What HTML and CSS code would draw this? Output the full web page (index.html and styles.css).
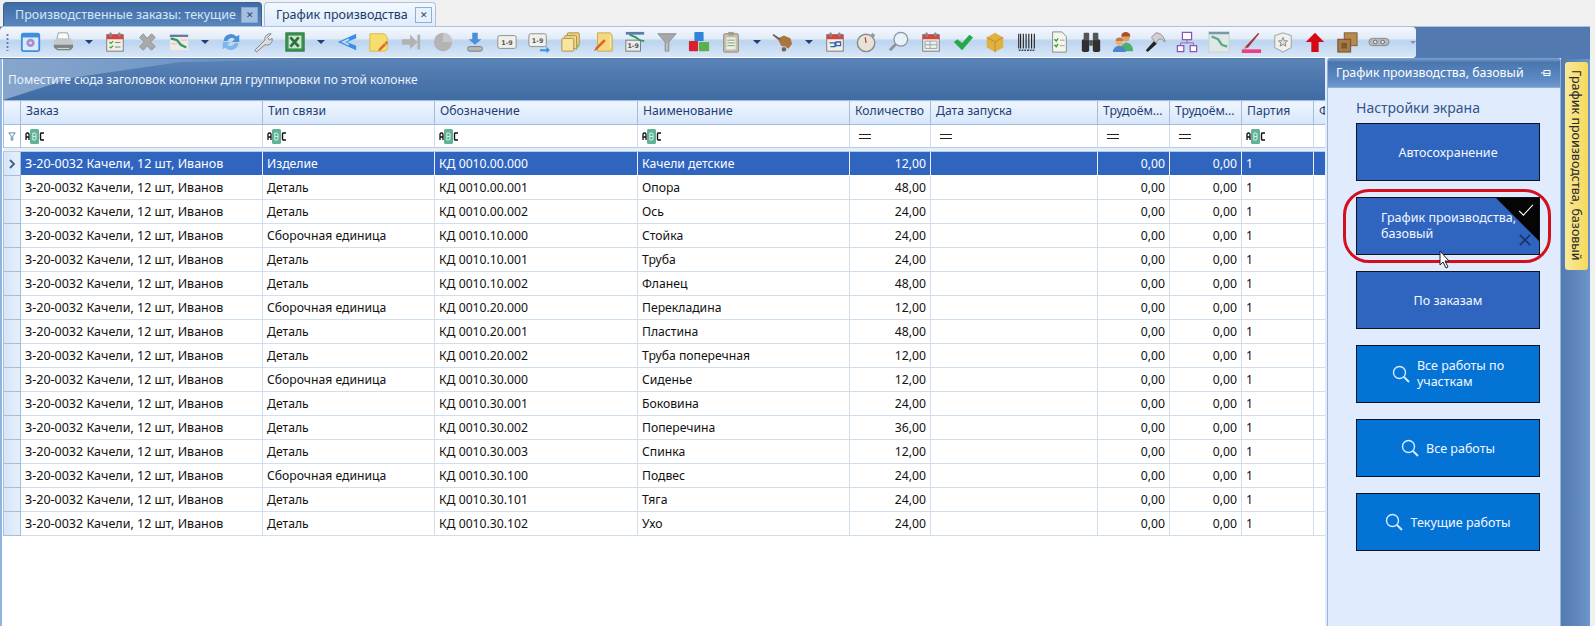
FILE: index.html
```html
<!DOCTYPE html>
<html lang="ru">
<head>
<meta charset="utf-8">
<title>График производства</title>
<link rel="stylesheet" href="styles.css">
</head>
<body>
<svg class="defs" width="0" height="0" aria-hidden="true">
  <defs>
    <symbol id="abc" viewBox="0 0 20 15">
      <rect x="5" y="0" width="9" height="15" rx="1.500" fill="#5fb394"/>
      <path d="M1 11V5l1-1h1l1 1v6M1 8h3" fill="none" stroke="#111" stroke-width="1.300"/>
      <path d="M7.800 4v7h2.500l.7-1V5l-.7-1zM8 7.500h3" fill="none" stroke="#d4f0e4" stroke-width="1"/>
      <path d="M19 4h-3l-.5 1v5l.5 1h3" fill="none" stroke="#111" stroke-width="1.400"/>
    </symbol>
    <symbol id="lens" viewBox="0 0 18 18">
      <circle cx="7.500" cy="7.500" r="6" fill="none" stroke="#d6ecff" stroke-width="1.400"/>
      <path d="M12 12l5 5" stroke="#d6ecff" stroke-width="2"/>
    </symbol>
    <symbol id="cal" viewBox="0 0 24 24">
      <rect x="3" y="4" width="18" height="18" fill="#f2efe6" stroke="#777"/>
      <rect x="3" y="4" width="18" height="5" fill="#d8443c"/>
      <rect x="6" y="1.500" width="2.500" height="5" rx="1" fill="#8a8a8a"/>
      <rect x="15.500" y="1.500" width="2.500" height="5" rx="1" fill="#8a8a8a"/>
    </symbol>
  </defs>
</svg>

<div class="app">
  <nav class="tabs">
    <div class="tab">Производственные заказы: текущие <span class="tab-close">✕</span></div>
    <div class="tab tab-active">График производства <span class="tab-close">✕</span></div>
  </nav>

  <div class="toolbar-row">
    <div class="toolbar">
      <span class="grip"></span>
      <span class="ti"><svg viewBox="0 0 24 24"><rect x="2" y="3" width="19" height="19" rx="2" fill="#dbe9f8" stroke="#3d8fe0" stroke-width="2"/><rect x="2" y="3" width="19" height="4" fill="#3d8fe0"/><circle cx="11.500" cy="13" r="4.500" fill="#a48fd0"/><circle cx="11.500" cy="13" r="1.500" fill="#e5def4"/></svg></span>
      <span class="ti"><svg viewBox="0 0 24 24"><path d="M7 2h10l2 8H5z" fill="#fafafa" stroke="#9a9a9a"/><path d="M2 11l3-3h15l3 4v6l-3 3H6l-4-4z" fill="#c4c8cc"/><path d="M2 15h21v3l-3 3H6l-4-3z" fill="#7d8286"/><path d="M6 19h13" stroke="#e4e4e4"/></svg></span>
      <span class="dd"></span>
      <span class="ti"><svg viewBox="0 0 24 24"><use href="#cal"/><path d="M6 12l1.500 1.500L10 11M6 17l1.500 1.500L10 16" stroke="#3aa036" fill="none" stroke-width="1.300"/><path d="M12 12.500h6M12 17.500h6" stroke="#777"/></svg></span>
      <span class="ti"><svg viewBox="0 0 24 24"><path d="M4 7l4-4 4 5 5-5 4 4-5 5 5 5-4 4-5-5-4 5-4-4 5-5z" fill="#a9a9a9" stroke="#939393"/></svg></span>
      <span class="ti"><svg viewBox="0 0 24 24"><rect x="2" y="4" width="20" height="17" fill="#f1e8e8"/><rect x="2" y="4" width="20" height="2.500" fill="#5d7da8"/><path d="M3 8l7 2 4 5 6 3" fill="none" stroke="#2e9a5c" stroke-width="2.500"/><path d="M3 14h7M14 10h7" stroke="#e2b8b8"/></svg></span>
      <span class="dd"></span>
      <span class="ti"><svg viewBox="0 0 24 24"><path d="M4 11a8 8 0 0 1 14-5l3-2v8h-8l3-3a5 5 0 0 0-8 2z" fill="#4d90d8"/><path d="M20 13a8 8 0 0 1-14 5l-3 2v-8h8l-3 3a5 5 0 0 0 8-2z" fill="#7fb6ea"/></svg></span>
      <span class="ti"><svg viewBox="0 0 24 24"><path d="M3 21l11-11a6 6 0 0 1 7-7l-4 4 2 3 3-2a6 6 0 0 1-8 7L5 23z" fill="#dcdcdc" stroke="#808080"/></svg></span>
      <span class="ti"><svg viewBox="0 0 24 24"><rect x="2" y="2" width="20" height="20" fill="#3a9150" stroke="#2a7a3e"/><rect x="5" y="5" width="14" height="14" fill="#cfe3d0"/><path d="M7 7l9 10M16 7L7 17" stroke="#23733a" stroke-width="3"/></svg></span>
      <span class="dd"></span>
      <span class="ti"><svg viewBox="0 0 24 24"><path d="M22 3v5L12 12l10 4v5L2 12z" fill="#3c8fe0"/><path d="M14 9l-6 3 6 3" fill="none" stroke="#bfe0fb" stroke-width="2"/></svg></span>
      <span class="ti"><svg viewBox="0 0 24 24"><path d="M2 3h16l3 4v13l-3 2H2z" fill="#f6dd6c" stroke="#d9b84a"/><path d="M12 19l8-8 2 2-8 8-3 1z" fill="#d96f2c"/><path d="M18 13l2 2" stroke="#f4c8a6"/></svg></span>
      <span class="ti"><svg viewBox="0 0 24 24"><path d="M2 9h9V4l8 8-8 8v-5H2z" fill="#b2b2b2"/><rect x="19" y="4" width="3" height="16" fill="#b2b2b2"/></svg></span>
      <span class="ti"><svg viewBox="0 0 24 24"><circle cx="12" cy="12" r="10" fill="#b4b4b4"/><path d="M12 12V2a10 10 0 0 1 10 10z" fill="#c8c8c8"/></svg></span>
      <span class="ti"><svg viewBox="0 0 24 24"><path d="M9 2h6v7h4l-7 6-7-6h4z" fill="#4a90d6"/><rect x="4" y="17" width="16" height="5" rx="2" fill="#b8b8b8" stroke="#777"/></svg></span>
      <span class="ti"><svg viewBox="0 0 24 24"><rect x="2" y="5" width="20" height="14" rx="2" fill="#f0f0ea" stroke="#8b8b8b"/><text class="nine" x="12" y="15">1-9</text></svg></span>
      <span class="ti"><svg viewBox="0 0 24 24"><rect x="1" y="3" width="19" height="14" rx="2" fill="#f0f0ea" stroke="#8b8b8b"/><text class="nine" x="10.500" y="13">1-9</text><path d="M13 20h7v-3l4 4-4 3v-2h-7z" fill="#3f8fdc"/></svg></span>
      <span class="ti"><svg viewBox="0 0 24 24"><rect x="8" y="2" width="13" height="14" rx="1" fill="#f0cf7a" stroke="#a98b4a"/><rect x="5" y="5" width="13" height="14" rx="1" fill="#f3d98a" stroke="#a98b4a"/><rect x="2" y="8" width="13" height="14" rx="1" fill="#f6e4a0" stroke="#a98b4a"/><path d="M18 14l3 2-4 6" fill="#8cbc5c"/></svg></span>
      <span class="ti"><svg viewBox="0 0 24 24"><path d="M6 2h14l2 3v17H6z" fill="#f5d77f" stroke="#c9a84e"/><path d="M2 22l2-4L13 9l2 2-9 9z" fill="#d9622c"/><path d="M20 6v12" stroke="#fff2c4"/></svg></span>
      <span class="ti"><svg viewBox="0 0 24 24"><rect x="2" y="10" width="16" height="12" fill="#eaeaea" stroke="#777"/><text class="nine" x="10" y="19">1-9</text><rect x="2" y="1" width="20" height="3" fill="#5d7da8"/><path d="M6 4l7 3 4 3 5 1" fill="none" stroke="#2e9a5c" stroke-width="2"/></svg></span>
      <span class="ti"><svg viewBox="0 0 24 24"><path d="M2 3h20l-8 9v10h-4V12z" fill="#a8a8a8" stroke="#8c8c8c"/><path d="M12 13v9" stroke="#d8d8d8"/></svg></span>
      <span class="ti"><svg viewBox="0 0 24 24"><rect x="7" y="1" width="10" height="10" rx="1" fill="#2f83d8"/><rect x="1" y="11" width="10" height="11" rx="1" fill="#d92030"/><rect x="12" y="12" width="11" height="10" rx="1" fill="#5cb04c"/></svg></span>
      <span class="ti"><svg viewBox="0 0 24 24"><rect x="4" y="3" width="16" height="20" rx="1" fill="#c8bfae" stroke="#8c8474"/><rect x="9" y="1" width="6" height="4" fill="#a59c8a"/><rect x="7" y="7" width="10" height="13" fill="#eef0e6"/><path d="M8 10h8M8 13h8M8 16h8" stroke="#6f9c6c"/></svg></span>
      <span class="dd"></span>
      <span class="ti"><svg viewBox="0 0 24 24"><path d="M1 5l6 3 6-3 7 3 2 6-4 5-8-3-3-6z" fill="#a8763e"/><path d="M1 4l8 5" stroke="#555" stroke-width="1.500"/><circle cx="13" cy="20" r="3" fill="#666" stroke="#ddd"/></svg></span>
      <span class="dd"></span>
      <span class="ti"><svg viewBox="0 0 24 24"><use href="#cal"/><path d="M6 13h6v4H7M18 12h-5v4h5z" fill="none" stroke="#2d62b4" stroke-width="1.400"/></svg></span>
      <span class="ti"><svg viewBox="0 0 24 24"><circle cx="11" cy="13" r="9.500" fill="#e8e3d8" stroke="#8a8a8a" stroke-width="1.600"/><path d="M11 13l-1-6" stroke="#b04040" stroke-width="1.300"/><path d="M18 2l3 3-2 2-3-3z" fill="#999"/></svg></span>
      <span class="ti"><svg viewBox="0 0 24 24"><circle cx="14" cy="9" r="7.500" fill="#e9f1f8" stroke="#8d959c" stroke-width="1.500"/><path d="M8.500 14.500L2 21" stroke="#8d959c" stroke-width="3"/></svg></span>
      <span class="ti"><svg viewBox="0 0 24 24"><use href="#cal"/><path d="M5.500 11h13v8h-13zM5.500 15h13M11 11v8" fill="none" stroke="#8ca0b8"/></svg></span>
      <span class="ti"><svg viewBox="0 0 24 24"><path d="M2 12l4-3 5 4 8-9 4 3L11 21z" fill="#25a84a"/></svg></span>
      <span class="ti"><svg viewBox="0 0 24 24"><path d="M12 2l9 5v11l-9 5-9-5V7z" fill="#e0b040"/><path d="M3 7l9 5 9-5M12 12v11" fill="none" stroke="#b98a24"/></svg></span>
      <span class="ti"><svg viewBox="0 0 24 24"><path d="M3 3v16M5 3v16M8 3v16M11 3v16M14 3v16M17 3v16M20 3v16" stroke="#222" stroke-width="1.200"/><path d="M3 21h18" stroke="#444" stroke-dasharray="2 1" stroke-width="1.500"/></svg></span>
      <span class="ti"><svg viewBox="0 0 24 24"><path d="M5 1h10l5 5v17H5z" fill="#f2f6ec" stroke="#7d8c7d"/><path d="M7 9l2 2 2-3M7 15l2 2 2-3" stroke="#35a035" fill="none" stroke-width="1.500"/><path d="M13 10h5M13 16h5" stroke="#999"/></svg></span>
      <span class="ti"><svg viewBox="0 0 24 24"><rect x="2" y="9" width="8" height="14" rx="2" fill="#2f2f2f"/><rect x="14" y="9" width="8" height="14" rx="2" fill="#2f2f2f"/><rect x="4" y="2" width="6" height="8" rx="1" fill="#555"/><rect x="14" y="2" width="6" height="8" rx="1" fill="#555"/><rect x="10" y="10" width="4" height="6" fill="#555"/></svg></span>
      <span class="ti"><svg viewBox="0 0 24 24"><circle cx="15" cy="7" r="4.500" fill="#e2a06a"/><path d="M10 6a5 5 0 0 1 10 0z" fill="#a8522c"/><path d="M9 22a6 8 0 0 1 14 0z" fill="#4caf70"/><circle cx="8" cy="12" r="4" fill="#eab07a"/><path d="M4 11a4 4 0 0 1 8 0z" fill="#c47a3c"/><path d="M1 23a7 7 0 0 1 14 0z" fill="#4b86cc"/></svg></span>
      <span class="ti"><svg viewBox="0 0 24 24"><path d="M2 21l9-10 3 3L4 23z" fill="#222"/><path d="M8 7l5-5c5 0 9 4 10 10-3-3-5-4-7-3l-3 4z" fill="#d0d0d0" stroke="#8a8a8a"/></svg></span>
      <span class="ti"><svg viewBox="0 0 24 24"><path d="M12 9v4M5 17v-4h14v4" fill="none" stroke="#8b5fb0"/><rect x="7" y="1.500" width="10" height="8" fill="#fff" stroke="#8b4fb0" stroke-width="1.300"/><rect x="1.500" y="16" width="7" height="6.500" fill="#fff" stroke="#8b4fb0" stroke-width="1.300"/><rect x="15.500" y="16" width="7" height="6.500" fill="#fff" stroke="#8b4fb0" stroke-width="1.300"/></svg></span>
      <span class="ti"><svg viewBox="0 0 24 24"><rect x="1" y="1" width="22" height="22" fill="#dfe8e4" stroke="#c6d2cc"/><rect x="1" y="1" width="22" height="2.500" fill="#7a98a8"/><path d="M4 6l7 3 4 6 6 2" fill="none" stroke="#5da890" stroke-width="2.500"/></svg></span>
      <span class="ti"><svg viewBox="0 0 24 24"><rect x="2" y="20" width="21" height="4" fill="#ee3f80"/><path d="M6 17L20 2l1 1-12 15-4 1z" fill="#9e3c3c"/><path d="M5 17l3 2-4 0z" fill="#d8a070"/></svg></span>
      <span class="ti"><svg viewBox="0 0 24 24"><path d="M3 5l9-3 9 3v13l-9 5-9-5z" fill="#f0f0ec" stroke="#9a9a9a"/><path d="M12 7l1.500 3.500 3.500.3-2.700 2.300.9 3.500-3.200-1.900-3.200 1.900.9-3.500L7 10.800l3.500-.3z" fill="#dcdcd0" stroke="#888"/></svg></span>
      <span class="ti"><svg viewBox="0 0 24 24"><path d="M12 2l10 10h-6v11H8V12H2z" fill="#d70a14"/></svg></span>
      <span class="ti"><svg viewBox="0 0 24 24"><rect x="9" y="2" width="14" height="14" fill="#b88a50" stroke="#7a5a30"/><rect x="2" y="9" width="14" height="14" fill="#a87a44" stroke="#6a4c28"/><rect x="6" y="13" width="6" height="6" fill="#7a5a30"/></svg></span>
      <span class="ti"><svg viewBox="0 0 24 24"><rect x="1" y="8" width="22" height="8" rx="4" fill="#b4b9bd" stroke="#888"/><circle cx="8" cy="12" r="2" fill="#e5e5e5" stroke="#666"/><circle cx="16" cy="12" r="2" fill="#e5e5e5" stroke="#666"/></svg></span>
      <span class="overflow"></span>
    </div>
  </div>

  <div class="workspace">
    <section class="grid">
      <div class="group-bar">
        <span class="group-shine"></span>
        <span class="group-text">Поместите сюда заголовок колонки для группировки по этой колонке</span>
      </div>
      <table class="table">
        <colgroup>
          <col class="c0"><col class="c1"><col class="c2"><col class="c3"><col class="c4"><col class="c5"><col class="c6"><col class="c7"><col class="c8"><col class="c9"><col class="c10">
        </colgroup>
        <thead>
          <tr class="head">
            <th></th><th>Заказ</th><th>Тип связи</th><th>Обозначение</th><th>Наименование</th><th>Количество</th><th>Дата запуска</th><th>Трудоём...</th><th>Трудоём...</th><th>Партия</th><th>Ф</th>
          </tr>
          <tr class="filter">
            <th class="rowhead"><svg class="funnel" viewBox="0 0 10 11"><path d="M1 1h8L6 5v5H4V5z" fill="none" stroke="#3f6c9c"/></svg></th>
            <td><svg class="abc"><use href="#abc"/></svg></td>
            <td><svg class="abc"><use href="#abc"/></svg></td>
            <td><svg class="abc"><use href="#abc"/></svg></td>
            <td><svg class="abc"><use href="#abc"/></svg></td>
            <td><span class="eq"></span></td>
            <td><span class="eq"></span></td>
            <td><span class="eq"></span></td>
            <td><span class="eq"></span></td>
            <td><svg class="abc"><use href="#abc"/></svg></td>
            <td></td>
          </tr>
          <tr class="gap"><td colspan="11"></td></tr>
        </thead>
        <tbody>
          <tr class="selected"><th class="rowhead"><svg class="marker" viewBox="0 0 7 10"><path d="M1 1l4 4-4 4" fill="none" stroke="#3f5f86" stroke-width="1.800"/></svg></th><td class="order">З-20-0032 Качели, 12 шт, Иванов</td><td>Изделие</td><td>КД 0010.00.000</td><td>Качели детские</td><td class="n">12,00</td><td></td><td class="n">0,00</td><td class="n">0,00</td><td>1</td><td></td></tr>
          <tr><th class="rowhead"></th><td class="order">З-20-0032 Качели, 12 шт, Иванов</td><td>Деталь</td><td>КД 0010.00.001</td><td>Опора</td><td class="n">48,00</td><td></td><td class="n">0,00</td><td class="n">0,00</td><td>1</td><td></td></tr>
          <tr><th class="rowhead"></th><td class="order">З-20-0032 Качели, 12 шт, Иванов</td><td>Деталь</td><td>КД 0010.00.002</td><td>Ось</td><td class="n">24,00</td><td></td><td class="n">0,00</td><td class="n">0,00</td><td>1</td><td></td></tr>
          <tr><th class="rowhead"></th><td class="order">З-20-0032 Качели, 12 шт, Иванов</td><td>Сборочная единица</td><td>КД 0010.10.000</td><td>Стойка</td><td class="n">24,00</td><td></td><td class="n">0,00</td><td class="n">0,00</td><td>1</td><td></td></tr>
          <tr><th class="rowhead"></th><td class="order">З-20-0032 Качели, 12 шт, Иванов</td><td>Деталь</td><td>КД 0010.10.001</td><td>Труба</td><td class="n">24,00</td><td></td><td class="n">0,00</td><td class="n">0,00</td><td>1</td><td></td></tr>
          <tr><th class="rowhead"></th><td class="order">З-20-0032 Качели, 12 шт, Иванов</td><td>Деталь</td><td>КД 0010.10.002</td><td>Фланец</td><td class="n">48,00</td><td></td><td class="n">0,00</td><td class="n">0,00</td><td>1</td><td></td></tr>
          <tr><th class="rowhead"></th><td class="order">З-20-0032 Качели, 12 шт, Иванов</td><td>Сборочная единица</td><td>КД 0010.20.000</td><td>Перекладина</td><td class="n">12,00</td><td></td><td class="n">0,00</td><td class="n">0,00</td><td>1</td><td></td></tr>
          <tr><th class="rowhead"></th><td class="order">З-20-0032 Качели, 12 шт, Иванов</td><td>Деталь</td><td>КД 0010.20.001</td><td>Пластина</td><td class="n">48,00</td><td></td><td class="n">0,00</td><td class="n">0,00</td><td>1</td><td></td></tr>
          <tr><th class="rowhead"></th><td class="order">З-20-0032 Качели, 12 шт, Иванов</td><td>Деталь</td><td>КД 0010.20.002</td><td>Труба поперечная</td><td class="n">12,00</td><td></td><td class="n">0,00</td><td class="n">0,00</td><td>1</td><td></td></tr>
          <tr><th class="rowhead"></th><td class="order">З-20-0032 Качели, 12 шт, Иванов</td><td>Сборочная единица</td><td>КД 0010.30.000</td><td>Сиденье</td><td class="n">12,00</td><td></td><td class="n">0,00</td><td class="n">0,00</td><td>1</td><td></td></tr>
          <tr><th class="rowhead"></th><td class="order">З-20-0032 Качели, 12 шт, Иванов</td><td>Деталь</td><td>КД 0010.30.001</td><td>Боковина</td><td class="n">24,00</td><td></td><td class="n">0,00</td><td class="n">0,00</td><td>1</td><td></td></tr>
          <tr><th class="rowhead"></th><td class="order">З-20-0032 Качели, 12 шт, Иванов</td><td>Деталь</td><td>КД 0010.30.002</td><td>Поперечина</td><td class="n">36,00</td><td></td><td class="n">0,00</td><td class="n">0,00</td><td>1</td><td></td></tr>
          <tr><th class="rowhead"></th><td class="order">З-20-0032 Качели, 12 шт, Иванов</td><td>Деталь</td><td>КД 0010.30.003</td><td>Спинка</td><td class="n">12,00</td><td></td><td class="n">0,00</td><td class="n">0,00</td><td>1</td><td></td></tr>
          <tr><th class="rowhead"></th><td class="order">З-20-0032 Качели, 12 шт, Иванов</td><td>Сборочная единица</td><td>КД 0010.30.100</td><td>Подвес</td><td class="n">24,00</td><td></td><td class="n">0,00</td><td class="n">0,00</td><td>1</td><td></td></tr>
          <tr><th class="rowhead"></th><td class="order">З-20-0032 Качели, 12 шт, Иванов</td><td>Деталь</td><td>КД 0010.30.101</td><td>Тяга</td><td class="n">24,00</td><td></td><td class="n">0,00</td><td class="n">0,00</td><td>1</td><td></td></tr>
          <tr><th class="rowhead"></th><td class="order">З-20-0032 Качели, 12 шт, Иванов</td><td>Деталь</td><td>КД 0010.30.102</td><td>Ухо</td><td class="n">24,00</td><td></td><td class="n">0,00</td><td class="n">0,00</td><td>1</td><td></td></tr>
        </tbody>
      </table>
    </section>

    <aside class="panel">
      <header class="panel-head">
        <span>График производства, базовый</span>
        <svg class="pin" viewBox="0 0 10 8"><path d="M0 4h3M3 1v6M3 1.500h6v5H3M3 4.500h6" fill="none" stroke="#fff"/></svg>
      </header>
      <div class="panel-body">
        <div class="panel-title">Настройки экрана</div>
        <button class="tile">Автосохранение</button>
        <div class="tile-wrap">
          <button class="tile tile-left"><span>График производства,<br>базовый</span>
            <span class="corner"></span>
            <svg class="check" viewBox="0 0 18 14"><path d="M1 8l5 5L17 1" fill="none" stroke="#fff" stroke-width="1.300"/></svg>
            <svg class="cross" viewBox="0 0 14 14"><path d="M1 1l12 12M13 1L1 13" fill="none" stroke="#1a3568" stroke-width="2.200"/></svg>
          </button>
          <span class="oval"></span>
          <svg class="cursor" viewBox="0 0 11 19"><path d="M1 1v14l3-3 3 6 2-1-3-6h4z" fill="#fff" stroke="#222"/></svg>
        </div>
        <button class="tile">По заказам</button>
        <button class="tile tile-search tile-wrapped"><svg class="lens"><use href="#lens"/></svg><span>Все работы по<br>участкам</span></button>
        <button class="tile tile-search"><svg class="lens"><use href="#lens"/></svg><span>Все работы</span></button>
        <button class="tile tile-search"><svg class="lens"><use href="#lens"/></svg><span>Текущие работы</span></button>
      </div>
    </aside>

    <div class="dock">
      <div class="dock-tab">График производства, базовый</div>
    </div>
  </div>
</div>
</body>
</html>
```

FILE: styles.css
```css
* { box-sizing: border-box; }
html, body { margin: 0; padding: 0; height: 100%; overflow: hidden; background: #f0f0f0; }
body { font: 12.5px "Noto Sans", sans-serif; color: #111; }
.defs { position: absolute; }

.app { width: 1595px; height: 626px; display: flex; flex-direction: column; background: #f0f0f0; }

/* tabs */
.tabs { height: 26px; flex: none; display: flex; gap: 2px; padding: 2px 0 0 3px; background: #f0f0f0; }
.tab { display: flex; align-items: center; justify-content: space-between; width: 259px; padding: 0 3px 0 11px; color: #d6e6f8; border-radius: 4px 4px 0 0; background: linear-gradient(#3f6ba6, #5a86bd); border: 1px solid #3a6298; border-bottom: 0; white-space: nowrap; }
.tab-active { width: 172px; color: #1b3a66; background: linear-gradient(#f2f8ff, #dfecfb); border-color: #a9c1dc; }
.tab-close { width: 17px; height: 16px; font-size: 9px; line-height: 14px; text-align: center; color: #27466e; background: #a3bedf; border: 1px solid #86a7ce; }
.tab-active .tab-close { background: #e8f1fb; border-color: #8fb0d4; }

/* toolbar */
.toolbar-row { height: 33px; flex: none; margin-right: 5px; background: #5279b0; border-top: 1px solid #a9c1dc; }
.toolbar { width: 1416px; height: 31px; padding-left: 6px; display: flex; align-items: center; border-radius: 4px 4px 4px 0; background: linear-gradient(#f4f8fd 0, #e2ecf8 38%, #bcd4ef 46%, #d8e7f8 100%); border-bottom: 1px solid #fff; }
.grip { width: 9px; height: 18px; flex: none; background: radial-gradient(circle, #5f7fa8 1px, transparent 1.2px) 0 0 / 3px 4px repeat-y; }
.ti { width: 32px; height: 24px; display: flex; justify-content: center; align-items: center; flex: none; }
.ti svg { width: 22px; height: 22px; display: block; }
.nine { font: 700 7px "DejaVu Sans", sans-serif; text-anchor: middle; fill: #555; }
.dd { width: 20px; flex: none; display: flex; justify-content: center; }
.dd::before { content: ""; border: 4px solid transparent; border-top: 4px solid #1f3f7a; border-bottom: 0; }
.overflow { width: 8px; margin-left: 15px; height: 3px; }
.overflow::before { content: ""; display: block; border: 3px solid transparent; border-top-color: #7a95bb; border-bottom: 0; margin: 0 auto; width: 0; }

/* workspace */
.workspace { flex: 1; display: flex; min-height: 0; }

/* grid */
.grid { width: 1325px; flex: none; padding-left: 1px; background: #fff; border-left: 2px solid #8fb4e0; display: flex; flex-direction: column; }
.group-bar { position: relative; height: 41px; padding-left: 5px; display: flex; align-items: center; color: #eaf2fc; overflow: hidden; background: linear-gradient(#5a83b7, #3f6ca4); flex: none; font-size: 12px; }
.group-shine { position: absolute; left: 0; top: 0; width: 320px; height: 41px; background: linear-gradient(100deg, #87a6cc 0, #7398c6 50%, #5a83b7 100%); clip-path: polygon(0 0, 100% 0, 55% 8%, 22% 45%, 0 100%); }
.group-text { position: relative; }

.table { border-collapse: collapse; table-layout: fixed; width: 1322px; font-size: 12.2px; }
.c0 { width: 17px; } .c1 { width: 242px; } .c2 { width: 172px; } .c3 { width: 203px; } .c4 { width: 212px; } .c5 { width: 81px; } .c6 { width: 167px; } .c7 { width: 72px; } .c8 { width: 72px; } .c9 { width: 72px; } .c10 { width: 12px; }

.table th, .table td { padding: 0 4px; border: 1px solid #d0deec; overflow: hidden; white-space: nowrap; font-weight: 400; text-align: left; height: 24px; }
.table .order { font-size: 12.5px; }
.head th { height: 24px; color: #1f3f72; padding: 0 4px 4px 5px; background: linear-gradient(#f0f6ff, #d6e6fa); border: 1px solid #a3bddc; }
.filter td, .filter th { height: 23px; background: #fff; border-bottom: 0; border-color: #cfdcec; }
.gap td { height: 4px; padding: 0; background: #e6eef8; border: 0; border-top: 1px solid #b8cce2; border-bottom: 1px solid #b8cce2; }
.rowhead { padding: 0 !important; background: linear-gradient(90deg, #d6e5f8, #e6f0fb); border-color: #a3bddc !important; text-align: center !important; }
.n { text-align: right !important; }
.selected td { background: #2f65bf; color: #fff; border-color: #fff #e8eefa; }
.abc { width: 20px; height: 15px; display: block; }
.eq { display: block; width: 12px; height: 5px; margin-left: 5px; border-top: 1.500px solid #222; border-bottom: 1.500px solid #222; }
.funnel { width: 8px; height: 9px; display: block; margin: 0 auto; }
.marker { width: 7px; height: 10px; display: block; margin: 0 auto; }

/* panel */
.panel { width: 236px; flex: none; margin-top: -1px; background: #e0ecfd; border-left: 2px solid #e0ecfd; display: flex; flex-direction: column; }
.panel-head { height: 30px; flex: none; display: flex; align-items: center; justify-content: space-between; padding: 0 9px 0 8px; color: #fff; font-size: 12.3px; border-radius: 3px 3px 0 0; background: linear-gradient(#7fa3d2, #4a76ae 15%, #5a88c2 70%, #7099cf); border: 1px solid #8fb0d4; border-top: 0; }
.pin { width: 10px; height: 8px; }
.panel-body { flex: 1; display: flex; flex-direction: column; align-items: flex-start; gap: 16px; padding: 10px 0 0 28px; border-left: 1px solid #9bb5d6; border-right: 1px solid #9bb5d6; }
.panel-title { font-size: 14px; height: 16px; margin: 0 0 -7px 0; color: #33558a; line-height: 20px; }
.tile { width: 184px; height: 58px; flex: none; border: 1px solid #0d1220; background: #2f65bf; color: #f4f8ff; font: 12.5px "Noto Sans", sans-serif; display: flex; align-items: center; justify-content: center; text-align: center; padding: 0; position: relative; }
.tile-wrap { position: relative; height: 58px; flex: none; }
.tile-left { text-align: left; justify-content: flex-start; padding: 0 0 0 24px; line-height: 16px; overflow: hidden; }
.corner { position: absolute; right: 0; top: 0; width: 0; height: 0; border-top: 43px solid #050505; border-left: 43px solid transparent; }
.tile-left span:first-child { position: relative; z-index: 1; }
.check { position: absolute; right: 5px; top: 6px; width: 16px; height: 12px; }
.cross { position: absolute; right: 8px; bottom: 8px; width: 12px; height: 12px; }
.oval { position: absolute; left: -13px; top: -8px; width: 208px; height: 74px; border: 3px solid #d4101f; border-radius: 26px; pointer-events: none; }
.cursor { position: absolute; left: 83px; top: 53px; width: 11px; height: 19px; }
.tile-search { background: #0473d6; gap: 7px; }
.tile-wrapped span { text-align: left; line-height: 16px; }
.lens { width: 18px; height: 18px; flex: none; }

/* dock */
.dock { flex: 1; margin-right: 5px; padding: 3px 0 0 4px; background: linear-gradient(90deg, #5279b0, #6c95ca); }
.dock-tab { width: 23px; height: 208px; writing-mode: vertical-rl; padding: 8px 0 0 0; line-height: 23px; color: #2a2a2a; border-radius: 3px; background: linear-gradient(90deg, #f8e99a, #f7d95c); white-space: nowrap; }
```
